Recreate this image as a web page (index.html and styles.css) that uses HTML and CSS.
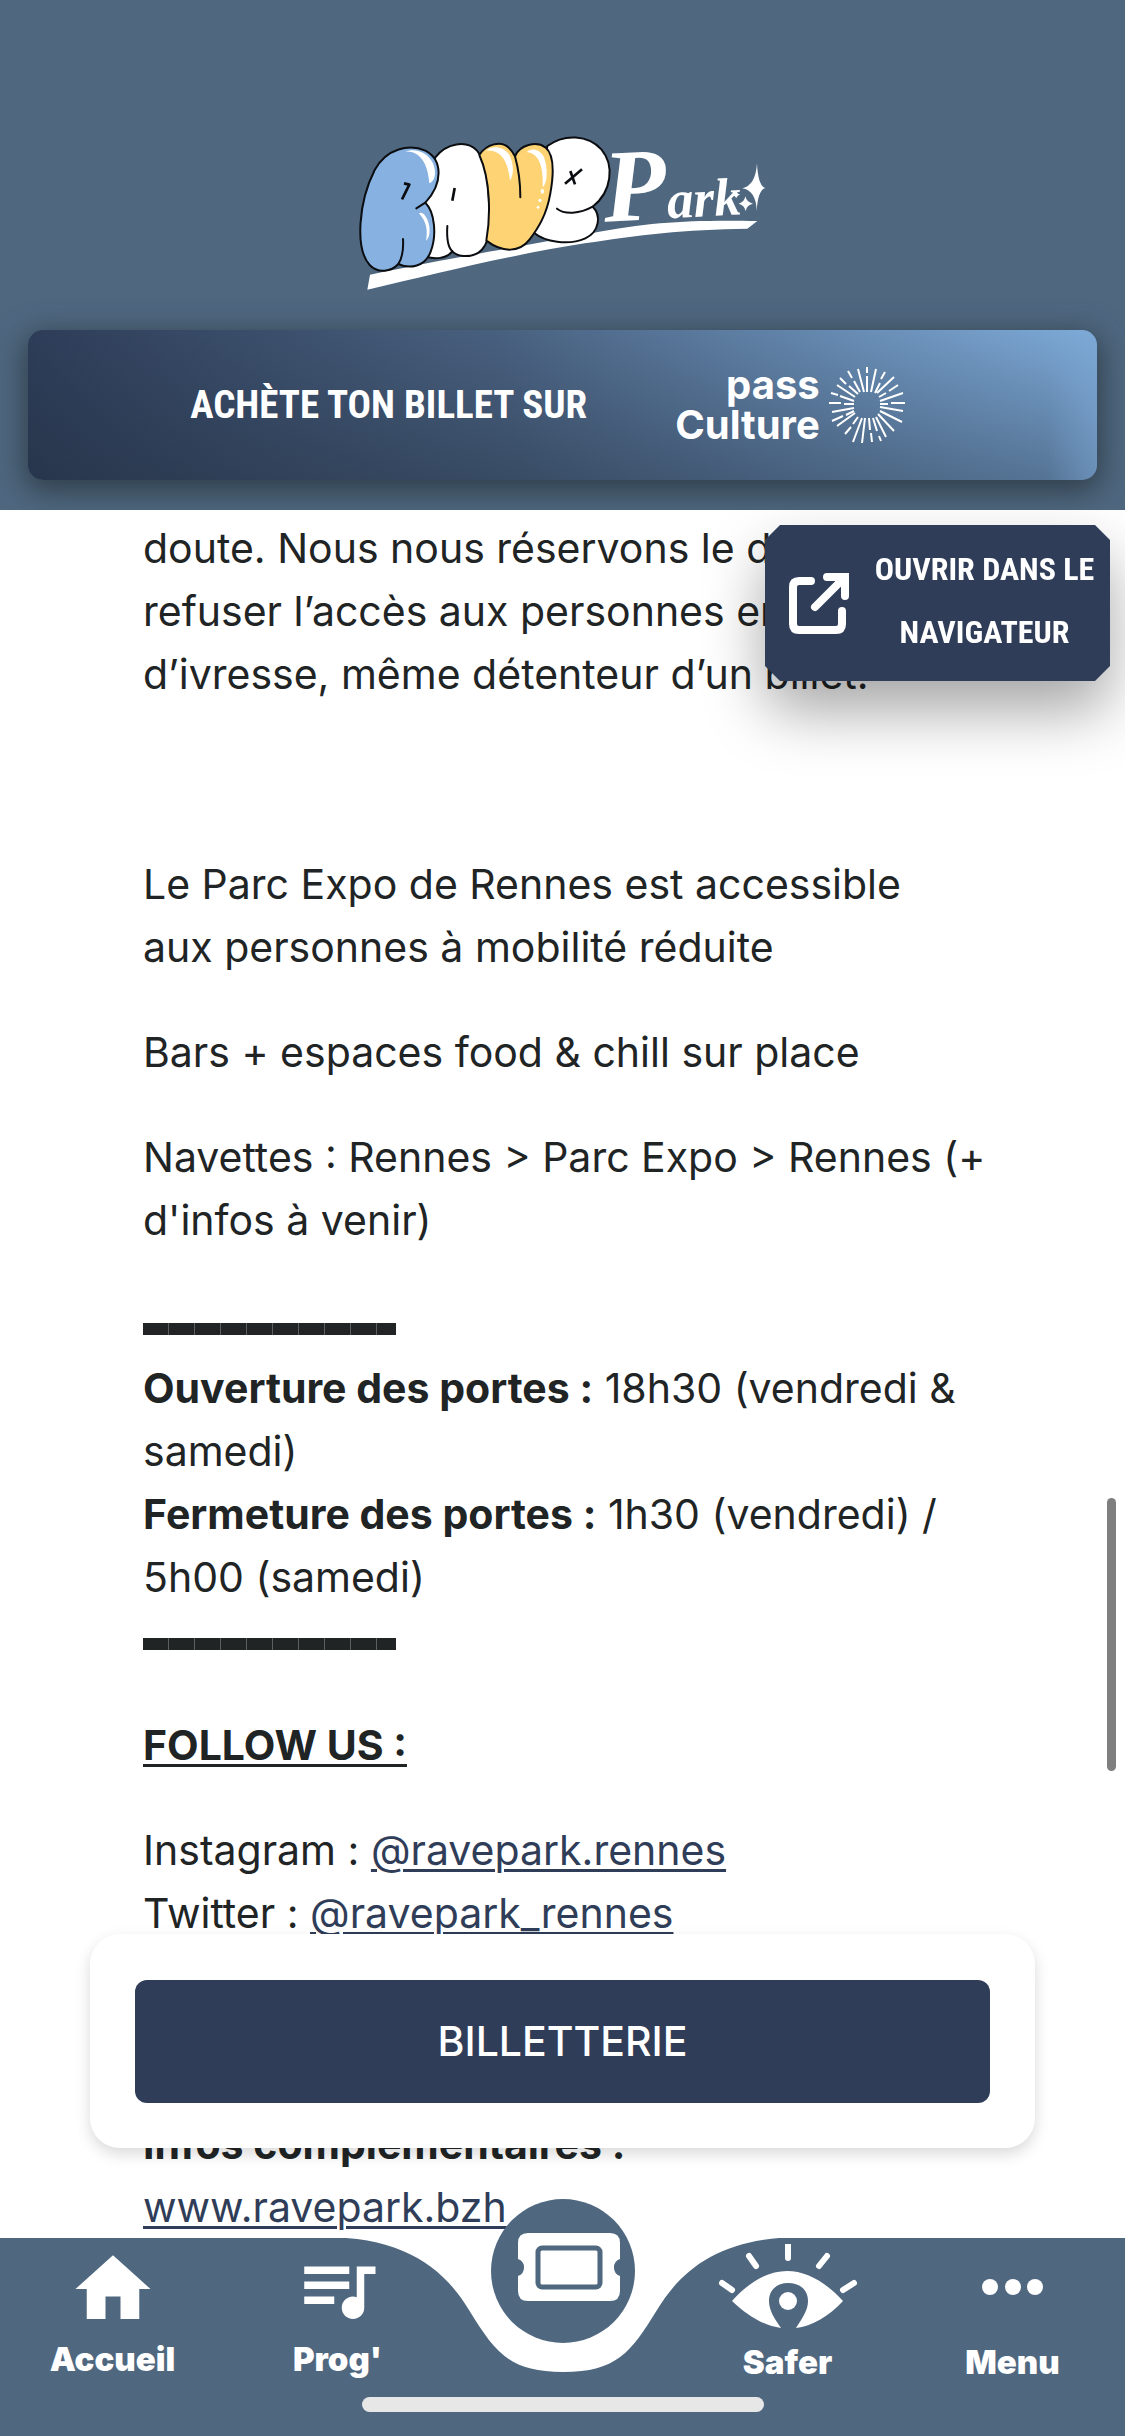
FILE: index.html
```html
<!DOCTYPE html>
<html lang="fr">
<head>
    <meta charset="UTF-8">
    <meta name="viewport" content="width=device-width, initial-scale=1.0">
    <title>Rave Park</title>
    <link rel="stylesheet" href="styles.css">
</head>
<body>
    <header class="header">
        <svg class="logo" viewBox="0 0 1350 570" role="img" aria-label="Rave Park">
            <!-- swoosh -->
            <path fill="#fff" d="M96 464C380 405 560 378 760 340 940 305 1060 300 1258 303L1228 326C1040 328 900 345 740 370 500 408 300 460 88 509Z"/>
            <g stroke="#0b0d10" stroke-width="6" stroke-linejoin="round" stroke-linecap="round">
                <path fill="#fff" d="M628 78C680 40 750 45 790 88 830 135 822 215 764 260 790 285 785 335 742 355 690 378 620 365 588 338Z"/>
                <path fill="none" d="M657 266C680 284 725 282 764 260"/>
                <path fill="#fff" d="M292 112C325 70 385 58 417 92 450 130 456 230 453 330 450 380 425 412 375 408 358 406 348 400 343 394 325 417 290 418 264 410L240 250Z"/>
                <path fill="none" d="M328 318C326 350 330 382 343 394"/>
                <path fill="#fdd374" d="M424 105C445 72 490 60 513 84 522 92 527 102 531 109 545 75 595 62 622 82 650 105 646 170 637 220 626 285 600 325 575 358 545 397 495 400 445 362 458 290 458 180 424 105Z"/>
                <path fill="none" d="M531 109C541 145 547 185 547 232"/>
                <path fill="#86b1e1" d="M110 150C145 85 215 70 262 92 315 120 315 190 262 248 290 275 297 345 278 395 262 440 215 448 181 432 160 455 120 462 95 435 50 385 62 245 110 150Z"/>
                <path fill="none" d="M262 248L235 265M195 357C197 390 192 415 181 432"/>
            </g>
            <g fill="none" stroke="#0b0d10" stroke-width="8" stroke-linejoin="round">
                <path d="M198 190L214 194 192 238M350 204L343 242M681 191L732 148M697 153L711 193"/>
            </g>
            <g fill="#fff">
                <path d="M202 95C245 92 270 130 274 190 292 185 296 155 285 130 265 90 225 85 202 95Z"/>
                <path d="M243 280C265 305 270 330 264 362 280 350 278 310 262 288 256 279 247 276 243 280Z"/>
                <path d="M444 92C490 88 510 125 516 182 528 165 528 130 513 103 495 78 460 76 444 92Z"/>
                <path d="M567 97C605 100 617 145 614 202 629 190 630 145 618 112 605 84 575 84 567 97Z"/>
                <ellipse cx="613" cy="214" rx="5" ry="8"/>
                <circle cx="606" cy="241" r="5"/>
                <circle cx="600" cy="262" r="4"/>
                <path d="M1257 130Q1260 198 1282 204 1260 210 1256 272 1254 212 1213 205 1253 196 1257 130Z"/>
                <path d="M1222 229Q1226 247 1245 251 1226 255 1223 273 1219 255 1202 251 1219 247 1222 229Z"/>
                <path d="M1194 212Q1196 221 1206 224 1196 227 1195 235 1192 227 1183 224 1192 221 1194 212Z"/>
            </g>
            <text class="logo-script" transform="rotate(-3 800 305)" x="800" y="305"><tspan class="logo-cap">P</tspan>ark</text>
        </svg>
        <a class="banner" href="#">
            <span class="banner-text">ACHÈTE TON BILLET SUR</span>
            <span class="pass">
                <span class="pass-name">pass<br>Culture</span>
                <svg class="pass-sun" viewBox="-40 -40 80 80" aria-hidden="true">
                    <g fill="none" stroke="#fff" stroke-width="2">
                        <path d="M0-38V-32M0-29V-13M9-36L4-13M18-33L14-26M13-22L8-12M27-28L10-12M31-20L22-14M19-12L12-8M36-12L13-4M38-2H24M21-1H13M36 6L13 2M35 17L13 6M27 26L11 9M19 32L9 12M14 36L12 31M10 26L6 13M5 37L4 28M3 25L2 13M-5 38L-2 13M-14 37L-5 13M-22 29L-16 22M-14 19L-9 12M-30 21L-12 8M-35 16L-24 11M-21 10L-13 6M-35 7L-13 3M-38-2H-26M-23-1H-13M-36-12L-29-10M-27-9L-13-4M-30-20L-12-8M-27-27L-21-21M-18-19L-9-11M-19-34L-15-27M-13-24L-7-13M-9-36L-3-13"/>
                    </g>
                </svg>
            </span>
        </a>
    </header>

    <main class="content">
        <p>doute. Nous nous réservons le droit de<br>refuser l’accès aux personnes en état<br>d’ivresse, même détenteur d’un billet.</p>
        <p class="blank"></p>
        <p>Le Parc Expo de Rennes est accessible<br>aux personnes à mobilité réduite</p>
        <p>Bars + espaces food &amp; chill sur place</p>
        <p>Navettes : Rennes &gt; Parc Expo &gt; Rennes (+<br>d'infos à venir)</p>
        <div class="hours">
            <hr class="dashes">
            <strong>Ouverture des portes :</strong> 18h30 (vendredi &amp;<br>samedi)<br>
            <strong>Fermeture des portes :</strong> 1h30 (vendredi) /<br>5h00 (samedi)
            <hr class="dashes">
        </div>
        <h2 class="follow">FOLLOW US :</h2>
        <p>Instagram : <a href="#">@ravepark.rennes</a><br>Twitter : <a href="#">@ravepark_rennes</a></p>
        <p class="more"><strong>Infos complémentaires :</strong><br><a href="#">www.ravepark.bzh</a></p>

        <button class="open-btn" type="button">
            <span class="open-inner">
                <svg class="open-icon" viewBox="0 0 60 61" aria-hidden="true">
                    <g fill="none" stroke="#fff" stroke-width="8" stroke-linecap="round" stroke-linejoin="round">
                        <path d="M22 8H10Q4 8 4 14V51Q4 57 10 57H47Q53 57 53 51V38"/>
                        <path d="M26 34L54 6"/>
                    </g>
                    <path fill="#fff" d="M38 0H60V23A4 4 0 0 1 52 23V14L46 8H38A4 4 0 0 1 38 0Z"/>
                </svg>
                <span class="open-label">OUVRIR DANS LE<br>NAVIGATEUR</span>
            </span>
        </button>
        <div class="scrollbar"></div>
        <div class="ticket-card">
            <button class="ticket-btn" type="button">BILLETTERIE</button>
        </div>
    </main>

    <nav class="tabbar">
        <svg class="notch" viewBox="0 0 480 136" aria-hidden="true">
            <path fill="#fff" d="M0 0C80 0 120 30 146 73 172 115 186 135 240 135 294 135 308 115 334 73 360 30 400 0 480 0Z"/>
        </svg>
        <a class="tab" href="#">
            <svg class="tab-icon" viewBox="0 0 24 24" aria-hidden="true"><path d="M10 20v-6h4v6h5v-8h3L12 3 2 12h3v8z"/></svg>
            <span>Accueil</span>
        </a>
        <a class="tab" href="#">
            <svg class="tab-icon" viewBox="0 0 24 24" aria-hidden="true"><path d="M15 6H3v2h12V6zm0 4H3v2h12v-2zM3 16h8v-2H3v2zM17 6v8.18c-.31-.11-.65-.18-1-.18-1.66 0-3 1.34-3 3s1.34 3 3 3 3-1.34 3-3V8h3V6h-5z"/></svg>
            <span>Prog'</span>
        </a>
        <a class="tab tab-main" href="#" aria-label="Billetterie">
            <svg class="circle" viewBox="0 0 144 144" aria-hidden="true">
                <circle cx="72" cy="72" r="72" fill="#4f6880"/>
                <path fill="#fff" d="M37 34H119Q129 34 129 44V60A9 9 0 0 0 129 77V92Q129 102 119 102H37Q27 102 27 92V77A9 9 0 0 0 27 60V44Q27 34 37 34Z"/>
                <rect x="47" y="49" width="62" height="39" rx="4" fill="none" stroke="#4f6880" stroke-width="5"/>
            </svg>
        </a>
        <a class="tab" href="#">
            <svg class="tab-icon wide" viewBox="0 0 140 93" aria-hidden="true">
                <path fill-rule="evenodd" d="M14 57C50 17 88 17 125 57 110 73 94 82 78 84 85 73 90 66 90 57 90 45 81 39 70 39 59 39 51 46 51 57 51 66 56 74 63 84 47 82 31 73 14 57Z"/>
                <circle cx="70" cy="57" r="9"/>
                <path fill="none" stroke="#fff" stroke-width="6" stroke-linecap="round" d="M70 1V14M31 12L38 22M109 12L101 22M4 39L14 46M136 39L125 46"/>
            </svg>
            <span>Safer</span>
        </a>
        <a class="tab" href="#">
            <svg class="tab-icon low" viewBox="0 0 90 93" aria-hidden="true"><circle cx="22" cy="43" r="8"/><circle cx="45" cy="43" r="8"/><circle cx="67" cy="43" r="8"/></svg>
            <span>Menu</span>
        </a>
        <div class="home-bar"></div>
    </nav>
</body>
</html>
```

FILE: styles.css
```css
* {
    box-sizing: border-box;
}

body {
    margin: 0;
    height: 100vh;
    display: flex;
    flex-direction: column;
    font-family: Inter, "Liberation Sans", sans-serif;
    font-size: 41px;
    line-height: 63px;
    color: #212425;
    background-color: #fff;
}

a {
    color: #2f3d58;
}

button {
    border: none;
    padding: 0;
    font: inherit;
    color: #fff;
    cursor: pointer;
}

.header {
    flex: none;
    display: flex;
    flex-direction: column;
    align-items: center;
    gap: 20px;
    padding: 120px 28px 30px;
    background-color: #4f6880;
    overflow: hidden;
}

.logo {
    width: 450px;
    height: 190px;
}

.logo-script {
    font-family: "Liberation Serif", serif;
    font-style: italic;
    font-weight: bold;
    font-size: 160px;
    fill: #fff;
}

.logo-cap {
    font-size: 310px;
}

.banner {
    width: 100%;
    height: 150px;
    display: flex;
    align-items: center;
    justify-content: center;
    gap: 88px;
    padding-right: 28px;
    border-radius: 15px;
    color: #fff;
    text-decoration: none;
    background-image:
        linear-gradient(to left, rgba(124, 167, 213, 0.5), rgba(124, 167, 213, 0) 50px),
        linear-gradient(to bottom, rgba(34, 46, 62, 0), rgba(34, 46, 62, 0.4)),
        linear-gradient(80deg, #2c3b56, #48607f 45%, #7eabd9);
    box-shadow: 0 8px 30px 4px rgba(44, 56, 66, 0.85);
}

.banner-text {
    font-family: "Roboto Condensed", "Liberation Sans Narrow", sans-serif;
    font-weight: bold;
    font-size: 39px;
    white-space: nowrap;
}

.pass {
    display: flex;
    align-items: center;
    gap: 7px;
}

.pass-name {
    font-size: 40px;
    font-weight: bold;
    line-height: 40px;
    text-align: right;
}

.pass-sun {
    width: 80px;
    height: 80px;
}

.content {
    flex: 1;
    min-height: 0;
    position: relative;
    overflow: hidden;
    padding: 7px 143px 0;
}

.content p {
    margin: 0 0 42px;
    white-space: nowrap;
}

.content a,
.follow {
    text-decoration: underline;
    text-decoration-thickness: 3px;
    text-underline-offset: 4px;
}

.content .blank {
    height: 63px;
}

.content .more {
    margin-top: 168px;
}

.hours {
    display: flow-root;
    margin-bottom: 42px;
    white-space: nowrap;
}

.dashes {
    width: 253px;
    height: 12px;
    margin: 29px 0 22px;
    border: none;
    background-image: repeating-linear-gradient(to right, #212425 0, #212425 25px, #5c5e5f 25px, #5c5e5f 26px);
}

.follow {
    margin: 0 0 42px;
    font-size: 41px;
    font-weight: 700;
}

strong {
    font-weight: 700;
}

.open-btn {
    position: absolute;
    top: 15px;
    right: 15px;
    background: none;
    filter: drop-shadow(0 30px 30px rgba(0, 0, 0, 0.35));
}

.open-inner {
    display: flex;
    align-items: center;
    gap: 25px;
    height: 156px;
    width: 345px;
    padding: 0 15px 0 24px;
    background-color: #2f3d58;
    clip-path: polygon(15px 0, calc(100% - 15px) 0, 100% 15px, 100% calc(100% - 15px), calc(100% - 15px) 100%, 15px 100%, 0 calc(100% - 15px), 0 15px);
}

.open-icon {
    flex: none;
    width: 60px;
    height: 61px;
}

.open-label {
    flex: 1;
    padding-bottom: 4px;
    font-family: "Roboto Condensed", "Liberation Sans Narrow", sans-serif;
    font-weight: bold;
    font-size: 32px;
    white-space: nowrap;
}

.scrollbar {
    position: absolute;
    top: 988px;
    right: 9px;
    width: 9px;
    height: 273px;
    border-radius: 5px;
    background-color: #7f7f7f;
}

.ticket-card {
    position: absolute;
    left: 90px;
    right: 90px;
    bottom: 90px;
    padding: 46px 45px 45px;
    border-radius: 30px;
    background-color: #fff;
    box-shadow: 0 6px 15px rgba(0, 0, 0, 0.15);
}

.ticket-btn {
    display: block;
    width: 100%;
    height: 123px;
    border-radius: 12px;
    font-weight: 500;
    background-color: #2f3d58;
}

.tabbar {
    flex: none;
    position: relative;
    display: grid;
    grid-template-columns: repeat(5, 1fr);
    height: 198px;
    padding-top: 6px;
    background-color: #4f6880;
}

.notch {
    position: absolute;
    top: -1px;
    left: calc(50% - 240px);
    width: 480px;
    height: 136px;
}

.tab {
    position: relative;
    display: flex;
    flex-direction: column;
    align-items: center;
    color: #fff;
    font-size: 33px;
    font-weight: 900;
    line-height: 50px;
    text-decoration: none;
}

.tab-icon {
    width: 90px;
    height: 90px;
    fill: #fff;
}

.wide {
    width: 140px;
    height: 93px;
}

.low {
    height: 93px;
}

/* round ticket button that sticks out above the bar */
.circle {
    position: absolute;
    top: -45px;
    left: calc(50% - 72px);
    width: 144px;
    height: 144px;
}

.home-bar {
    position: absolute;
    left: calc(50% - 201px);
    bottom: 24px;
    width: 402px;
    height: 15px;
    border-radius: 8px;
    background-color: #e8e7e8;
}
```
